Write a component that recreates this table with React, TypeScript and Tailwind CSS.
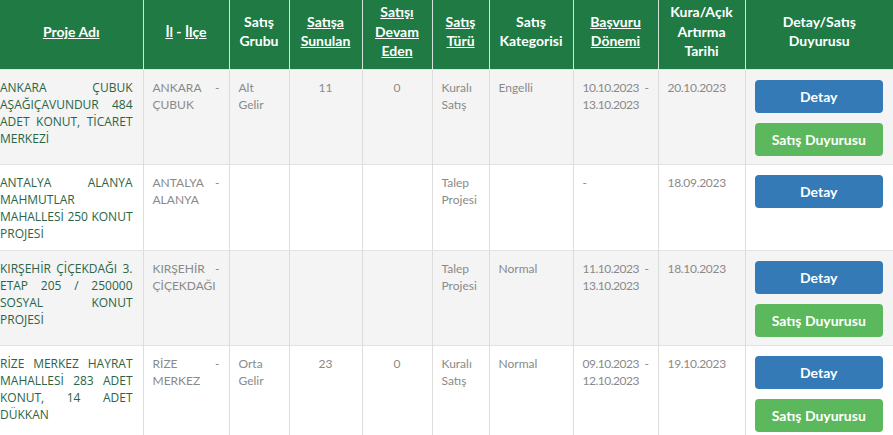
import React from 'react';

type Row = {
  name: string;
  place: string;
  group: string;
  offered: string;
  ongoing: string;
  type: string;
  category: string;
  period: string;
  date: string;
  announce: boolean;
};

const rows: Row[] = [
  {
    name: 'ANKARA ÇUBUK AŞAĞIÇAVUNDUR 484 ADET KONUT, TİCARET MERKEZİ',
    place: 'ANKARA - ÇUBUK',
    group: 'Alt Gelir',
    offered: '11',
    ongoing: '0',
    type: 'Kuralı Satış',
    category: 'Engelli',
    period: '10.10.2023 - 13.10.2023',
    date: '20.10.2023',
    announce: true,
  },
  {
    name: 'ANTALYA ALANYA MAHMUTLAR MAHALLESİ 250 KONUT PROJESİ',
    place: 'ANTALYA - ALANYA',
    group: '',
    offered: '',
    ongoing: '',
    type: 'Talep Projesi',
    category: '',
    period: '-',
    date: '18.09.2023',
    announce: false,
  },
  {
    name: 'KIRŞEHİR ÇİÇEKDAĞI 3. ETAP 205 / 250000 SOSYAL KONUT PROJESİ',
    place: 'KIRŞEHİR - ÇİÇEKDAĞI',
    group: '',
    offered: '',
    ongoing: '',
    type: 'Talep Projesi',
    category: 'Normal',
    period: '11.10.2023 - 13.10.2023',
    date: '18.10.2023',
    announce: true,
  },
  {
    name: 'RİZE MERKEZ HAYRAT MAHALLESİ 283 ADET KONUT, 14 ADET DÜKKAN',
    place: 'RİZE - MERKEZ',
    group: 'Orta Gelir',
    offered: '23',
    ongoing: '0',
    type: 'Kuralı Satış',
    category: 'Normal',
    period: '09.10.2023 - 12.10.2023',
    date: '19.10.2023',
    announce: true,
  },
];

const th = 'border-x border-white/80 px-[6px] pt-[2px] pb-[8px] text-center align-middle font-bold';
const td = 'border-x border-[#dddddd] px-[9px] pt-[9px] pb-[8px] align-top';

export default function App() {
  return (
    <div className="w-[893px] overflow-hidden bg-white" style={{ fontFamily: 'Lato, "Open Sans", sans-serif' }}>
      <table className="w-[893px] table-fixed border-collapse">
        <colgroup>
          <col className="w-[143px]" />
          <col className="w-[86px]" />
          <col className="w-[60px]" />
          <col className="w-[73px]" />
          <col className="w-[70px]" />
          <col className="w-[57px]" />
          <col className="w-[84px]" />
          <col className="w-[85px]" />
          <col className="w-[87px]" />
          <col className="w-[148px]" />
        </colgroup>
        <thead>
          <tr className="h-[69px] bg-[#1f7a44] text-[14px] leading-[19.5px] text-white">
            <th className={`${th} border-l-0`}>
              <span className="underline">Proje Adı</span>
            </th>
            <th className={th}>
              <span className="underline">İl</span> - <span className="underline">İlçe</span>
            </th>
            <th className={th}>Satış Grubu</th>
            <th className={th}>
              <span className="underline">Satışa Sunulan</span>
            </th>
            <th className={th}>
              <span className="underline">Satışı Devam Eden</span>
            </th>
            <th className={th}>
              <span className="underline">Satış Türü</span>
            </th>
            <th className={th}>Satış Kategorisi</th>
            <th className={th}>
              <span className="underline">Başvuru Dönemi</span>
            </th>
            <th className={th}>Kura/Açık Artırma Tarihi</th>
            <th className={`${th} border-r-0 px-[20px]`}>Detay/Satış Duyurusu</th>
          </tr>
        </thead>
        <tbody className="text-[12px] leading-[17px] text-[#8a8a8a]">
          {rows.map((r, i) => (
            <tr key={i} className={`border-t border-[#e3e3e3] ${i % 2 === 0 ? 'bg-[#f4f4f4]' : 'bg-white'}`}>
              <td
                className={`${td} border-l-0 pl-0 pr-[10px] text-justify font-['Open_Sans',sans-serif] text-[#2a6445]`}
              >
                {r.name}
              </td>
              <td className={`${td} text-justify`}>{r.place}</td>
              <td className={td}>{r.group}</td>
              <td className={`${td} text-center`}>{r.offered}</td>
              <td className={`${td} text-center`}>{r.ongoing}</td>
              <td className={td}>{r.type}</td>
              <td className={td}>{r.category}</td>
              <td className={`${td} text-justify tracking-[-0.5px]`}>{r.period}</td>
              <td className={`${td} tracking-[-0.3px]`}>{r.date}</td>
              <td className={`${td} border-r-0 pr-[10px] pt-[10px]`}>
                <div className="flex flex-col gap-[10px]">
                  <button className="h-[33px] w-full rounded-[4px] bg-[#337ab7] text-[14px] font-bold text-white">
                    Detay
                  </button>
                  {r.announce && (
                    <button className="h-[33px] w-full rounded-[4px] bg-[#5cb85c] text-[14px] font-bold text-white">
                      Satış Duyurusu
                    </button>
                  )}
                </div>
              </td>
            </tr>
          ))}
        </tbody>
      </table>
    </div>
  );
}
